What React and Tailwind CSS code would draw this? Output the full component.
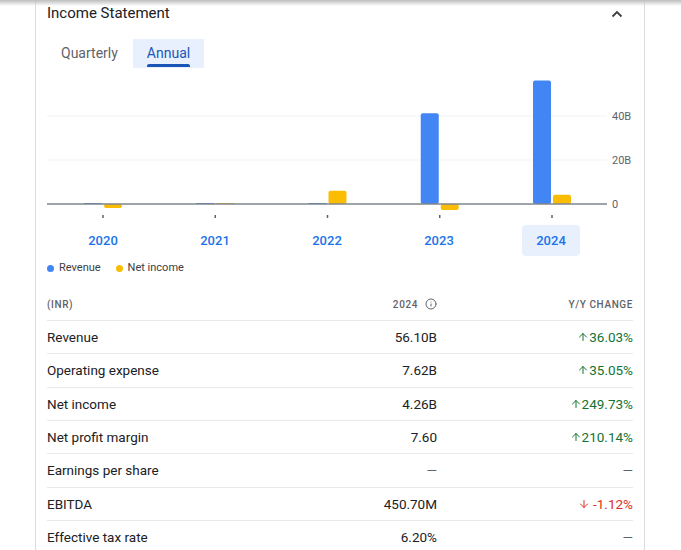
import { ArrowUp, ArrowDown, Info } from 'lucide-react'

const years = ['2020', '2021', '2022', '2023', '2024']

// values in billions, read off the chart
const revenue = [0, 0.4, 0.4, 41.24, 56.1]
const netIncome = [-1.8, 0.3, 6, -2.7, 4.26]

const rows = [
    { label: 'Revenue', value: '56.10B', change: '36.03%', dir: 'up' },
    { label: 'Operating expense', value: '7.62B', change: '35.05%', dir: 'up' },
    { label: 'Net income', value: '4.26B', change: '249.73%', dir: 'up' },
    { label: 'Net profit margin', value: '7.60', change: '210.14%', dir: 'up' },
    { label: 'Earnings per share', value: null, change: null },
    { label: 'EBITDA', value: '450.70M', change: '-1.12%', dir: 'down' },
    { label: 'Effective tax rate', value: '6.20%', change: null },
]

const BASE = 129
const PX_PER_B = 2.2

function Bar({ x, v, color }) {
    const h = Math.max(Math.abs(v) * PX_PER_B, 1)
    const y = v >= 0 ? BASE - h : BASE
    return <rect x={x} y={y} width={18} height={h} rx={h > 3 ? 2 : 0} fill={color} />
}

function Chart() {
    return (
        <svg width="586" height="147" className="block">
            <line x1="0" x2="560" y1="41" y2="41" stroke="#f1f3f4" strokeWidth="1" />
            <line x1="0" x2="560" y1="85" y2="85" stroke="#f1f3f4" strokeWidth="1" />
            {years.map((y, i) => {
                const c = 56 + 112.25 * i
                return (
                    <g key={y}>
                        <Bar x={c - 19} v={revenue[i]} color="#4285f4" />
                        <Bar x={c + 1} v={netIncome[i]} color="#fbbc04" />
                        <rect x={c - 0.75} y={140} width={1.5} height={3} fill="#5f6368" />
                    </g>
                )
            })}
            <line x1="0" x2="560" y1={BASE} y2={BASE} stroke="#80868b" strokeWidth="1.5" />
            <g fontFamily="Roboto, sans-serif" fontSize="11" fill="#5f6368">
                <text x="565" y="41" dominantBaseline="central">40B</text>
                <text x="565" y="85" dominantBaseline="central">20B</text>
                <text x="565" y={BASE} dominantBaseline="central">0</text>
            </g>
        </svg>
    )
}

function Change({ row }) {
    if (!row.change) return <span className="text-[#5f6368]">—</span>
    if (row.dir === 'down') {
        return (
            <span className="flex items-center text-[#d93025]">
                <ArrowDown size={12} strokeWidth={2} className="mr-[3px]" />
                {row.change}
            </span>
        )
    }
    return (
        <span className="flex items-center text-[#137333]">
            <ArrowUp size={12} strokeWidth={2} className="mr-[0px]" />
            {row.change}
        </span>
    )
}

export default function App() {
    return (
        <div className="relative h-[550px] w-[681px] overflow-hidden bg-white font-['Roboto',sans-serif] text-[#202124]">
            <div className="absolute inset-x-0 top-0 h-[6px] bg-gradient-to-b from-[#bdbdbd] to-white/0" />

            <div className="ml-[35px] w-[610px] border-x border-[#dadce0] px-[11px]">
                {/* title */}
                <div className="flex h-[27px] items-center justify-between">
                    <span className="text-[15px]">Income Statement</span>
                    <svg width="12" height="8" viewBox="0 0 12 8" className="mr-[10px]">
                        <path d="M1.5 6.5 L6 2 L10.5 6.5" fill="none" stroke="#3c4043" strokeWidth="1.8" />
                    </svg>
                </div>

                {/* tabs */}
                <div className="mt-[12px] flex gap-[1px] text-[14px]">
                    <div className="flex h-[29px] items-center px-[14px] text-[#5f6368]">Quarterly</div>
                    <div className="relative flex h-[29px] items-center bg-[#e8f0fe] px-[14px] text-[#1a56b8]">
                        Annual
                        <div className="absolute bottom-[1px] left-[14px] right-[14px] h-[3px] rounded-t-[2px] bg-[#1a56b8]" />
                    </div>
                </div>

                {/* chart */}
                <div className="mt-[7px]">
                    <Chart />
                </div>
                <div className="mt-[3px] flex w-[560px]">
                    {years.map((y) => (
                        <div key={y} className="flex flex-1 justify-center">
                            <div className={`flex h-[31px] w-[58px] items-center justify-center rounded-[4px] text-[13px] font-medium text-[#1a73e8] ${y === '2024' ? 'bg-[#e8f0fe]' : ''}`}>
                                {y}
                            </div>
                        </div>
                    ))}
                </div>

                {/* legend */}
                <div className="mt-[5px] flex h-[14px] items-center text-[11px] text-[#3c4043]">
                    <span className="mr-[5px] h-[7px] w-[7px] rounded-full bg-[#4285f4]" />
                    Revenue
                    <span className="ml-[15px] mr-[5px] h-[7px] w-[7px] rounded-full bg-[#fbbc04]" />
                    Net income
                </div>

                {/* table */}
                <div className="mt-[13px]">
                    <div className="flex h-[32px] items-center text-[10px] font-medium tracking-[0.6px] text-[#5f6368]">
                        <div className="flex-1">(INR)</div>
                        <div className="flex w-[150px] items-center justify-end">
                            2024
                            <Info size={12} strokeWidth={2} className="ml-[7px] mr-[0px]" />
                        </div>
                        <div className="w-[196px] text-right">Y/Y CHANGE</div>
                    </div>
                    {rows.map((row) => (
                        <div key={row.label} className="flex h-[33.33px] items-center border-t border-[#e8eaed] text-[13.5px]">
                            <div className="flex-1">{row.label}</div>
                            <div className="w-[150px] text-right">
                                {row.value ? row.value : <span className="text-[#5f6368]">—</span>}
                            </div>
                            <div className="flex w-[196px] justify-end">
                                <Change row={row} />
                            </div>
                        </div>
                    ))}
                </div>
            </div>
        </div>
    )
}
